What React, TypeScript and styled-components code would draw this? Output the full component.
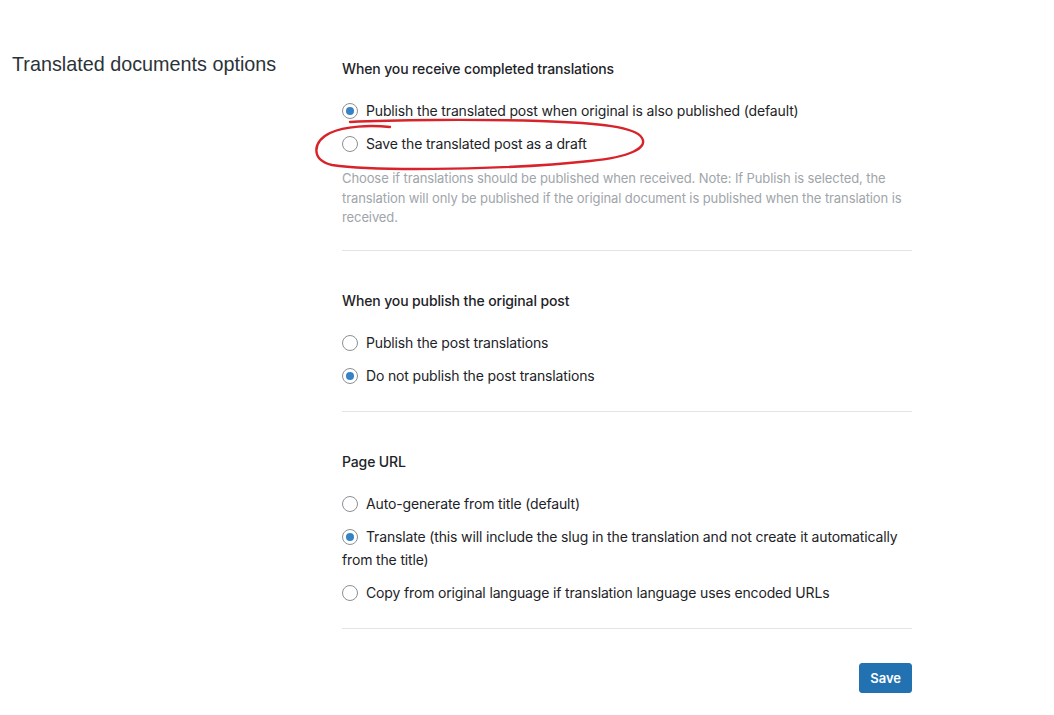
import * as React from "react";
import styled, { createGlobalStyle } from "styled-components";

type Option = { label: string; checked?: boolean };
type Section = { title: string; name: string; options: Option[]; note?: string };

const sections: Section[] = [
  {
    title: "When you receive completed translations",
    name: "received",
    options: [
      { label: "Publish the translated post when original is also published (default)", checked: true },
      { label: "Save the translated post as a draft" },
    ],
    note:
      "Choose if translations should be published when received. Note: If Publish is selected, the translation will only be published if the original document is published when the translation is received.",
  },
  {
    title: "When you publish the original post",
    name: "original",
    options: [
      { label: "Publish the post translations" },
      { label: "Do not publish the post translations", checked: true },
    ],
  },
  {
    title: "Page URL",
    name: "url",
    options: [
      { label: "Auto-generate from title (default)" },
      {
        label: "Translate (this will include the slug in the translation and not create it automatically from the title)",
        checked: true,
      },
      { label: "Copy from original language if translation language uses encoded URLs" },
    ],
  },
];

const App: React.FC = () => {
  return (
    <Page>
      <GlobalStyle />
      <SideTitle>Translated documents options</SideTitle>
      <Settings>
        {sections.map((section, i) => (
          <Block key={section.name} first={i === 0}>
            <BlockTitle>{section.title}</BlockTitle>
            <Options>
              {section.options.map((opt) => (
                <OptionLabel key={opt.label}>
                  <Radio checked={!!opt.checked} />
                  {opt.label}
                </OptionLabel>
              ))}
            </Options>
            {section.note && <Note>{section.note}</Note>}
            {i === 0 && (
              <Scribble width="340" height="60" viewBox="310 115 340 60">
                <path
                  d="M390,127 C370,125 345,126 330,133 C312,142 311,160 332,165 C380,172 520,169 590,161 C630,157 648,148 642,138 C636,127 600,123 540,121 C470,119 390,120 350,122"
                  fill="none"
                  stroke="#d8232a"
                  strokeWidth="2.4"
                  strokeLinecap="round"
                />
              </Scribble>
            )}
          </Block>
        ))}
        <Actions>
          <SaveButton>Save</SaveButton>
        </Actions>
      </Settings>
    </Page>
  );
};

const GlobalStyle = createGlobalStyle`
  body {
    margin: 0;
    background: #fff;
    font-family: Inter, "Liberation Sans", Arial, sans-serif;
    color: #1d2327;
  }
`;

const Page = styled.main`
  display: grid;
  grid-template-columns: 330px 570px;
  padding: 52px 0 0 12px;
  align-items: start;
`;

const SideTitle = styled.h2`
  margin: 0;
  font-family: "Liberation Sans", Arial, sans-serif;
  font-size: 19.8px;
  line-height: 24px;
  font-weight: 400;
  color: #2c3338;
`;

const Settings = styled.div`
  display: flex;
  flex-direction: column;
  padding-top: 6px;
`;

const Block = styled.section<{ first?: boolean }>`
  position: relative;
  padding: ${(p) => (p.first ? "1px" : "40px")} 0 24px;
  border-bottom: 1px solid #e4e4e6;
`;

const BlockTitle = styled.h3`
  margin: 0 0 20px;
  font-size: 14px;
  line-height: 20px;
  font-weight: 500;
  letter-spacing: -0.13px;
  color: #1d2327;
`;

const Options = styled.div`
  display: flex;
  flex-direction: column;
  gap: 10px;
`;

const OptionLabel = styled.label`
  display: block;
  font-size: 14px;
  line-height: 23px;
  letter-spacing: -0.15px;
  color: #1d2327;
`;

const Radio = styled.input.attrs({ type: "radio", readOnly: true })`
  appearance: none;
  display: inline-block;
  box-sizing: border-box;
  width: 16px;
  height: 16px;
  margin: 0 8px 0 0;
  vertical-align: -3px;
  border: 1px solid #8c8f94;
  border-radius: 50%;
  background: #fff;
  position: relative;

  &:checked::before {
    content: "";
    position: absolute;
    left: 3px;
    top: 3px;
    width: 8px;
    height: 8px;
    border-radius: 50%;
    background: #3582c4;
  }
`;

const Note = styled.p`
  margin: 14px 0 -2px;
  font-size: 13px;
  line-height: 19.5px;
  letter-spacing: -0.1px;
  color: #a0a5aa;
`;

const Scribble = styled.svg`
  position: absolute;
  left: -32px;
  top: 57px;
  pointer-events: none;
  overflow: visible;
`;

const Actions = styled.div`
  display: flex;
  justify-content: flex-end;
  padding-top: 34px;
`;

const SaveButton = styled.button`
  height: 30px;
  padding: 0 10px;
  border: 1px solid #2271b1;
  border-radius: 3px;
  background: #2271b1;
  color: #fff;
  font-family: Inter, "Liberation Sans", Arial, sans-serif;
  font-size: 13px;
  font-weight: 600;
  cursor: pointer;
`;

export default App;
